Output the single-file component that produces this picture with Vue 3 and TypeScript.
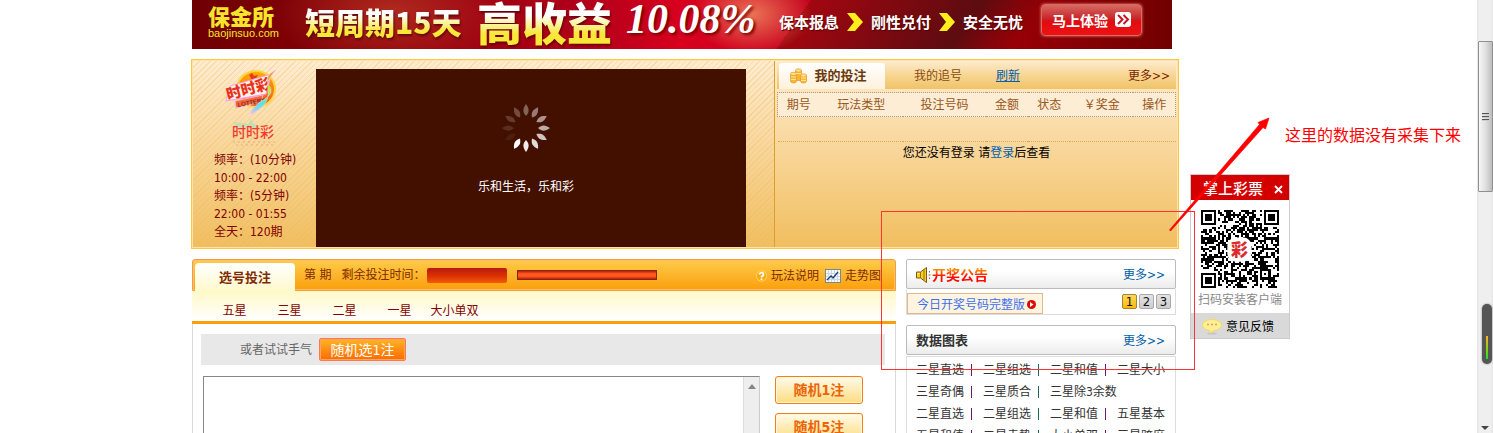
<script setup lang="ts">
import { ref } from 'vue'

const schedule = ['频率：(10分钟)', '10:00 - 22:00', '频率：(5分钟)', '22:00 - 01:55', '全天：120期']
const columns = ['期号', '玩法类型', '投注号码', '金额', '状态', '￥奖金', '操作']
const modes = ['五星', '三星', '二星', '一星', '大小单双']
const charts: string[][] = [
  ['二星直选', '二星组选', '二星和值', '二星大小'],
  ['三星奇偶', '三星质合', '三星除3余数'],
  ['二星直选', '二星组选', '二星和值', '五星基本'],
  ['五星和值', '二星走势', '大小单双', '三星跨度'],
]
const activePage = ref(1)
const numbers = ref('')
const petals = [0.35, 0.45, 0.55, 0.65, 0.75, 0.85, 0.92, 1, 0.06, 0.12, 0.18, 0.25].map((o, i) => ({
  o,
  r: i * 30,
}))

const SIZE = 37

function finder(x: number, y: number): boolean | null {
  const corners = [[0, 0], [SIZE - 7, 0], [0, SIZE - 7]]
  for (const [cx, cy] of corners) {
    const dx = x - cx
    const dy = y - cy
    if (dx >= -1 && dx <= 7 && dy >= -1 && dy <= 7) {
      const d = Math.max(Math.abs(dx - 3), Math.abs(dy - 3))
      return d === 3 || d <= 1
    }
  }
  const a = Math.max(Math.abs(x - 30), Math.abs(y - 30))
  if (a <= 2) return a !== 1
  return null
}

function buildQr(): string {
  let seed = 20157
  let d = ''
  for (let y = 0; y < SIZE; y++) {
    for (let x = 0; x < SIZE; x++) {
      seed = (seed * 1103515245 + 12345) % 2147483648
      const fixed = finder(x, y)
      const on = fixed === null ? (seed >> 12) % 100 < 52 : fixed
      if (on) d += `M${x} ${y}h1v1h-1z`
    }
  }
  return d
}
const qrPath = buildQr()
</script>

<template>
  <div class="page">
    <main class="main">
      <a href="#" class="banner">
        <span class="brand"><b>保金所</b><i>baojinsuo.com</i></span>
        <span class="term">短周期15天</span>
        <span class="yield">高收益</span>
        <span class="rate">10.08%</span>
        <span class="perks">
          <span>保本报息</span>
          <svg width="16" height="18" viewBox="0 0 16 18"><path d="M0 0h8l8 9-8 9H0l7-9z" fill="#ffee1c" /></svg>
          <span>刚性兑付</span>
          <svg width="16" height="18" viewBox="0 0 16 18"><path d="M0 0h8l8 9-8 9H0l7-9z" fill="#ffee1c" /></svg>
          <span>安全无忧</span>
        </span>
        <span class="try">
          马上体验
          <svg width="16" height="15" viewBox="0 0 16 15">
            <rect width="16" height="15" rx="3" fill="#fff" />
            <path d="M3 3l4.500 4.500L3 12M8.500 3l4.500 4.500L8.500 12" fill="none" stroke="#c8141c" stroke-width="2" />
          </svg>
        </span>
      </a>

      <section class="top">
        <div class="draw">
          <div class="info">
            <svg class="logo" width="60" height="78" viewBox="0 0 60 78">
              <defs>
                <linearGradient id="ball" x1="0" y1="0" x2="0" y2="1">
                  <stop offset="0" stop-color="#ffb000" /><stop offset="1" stop-color="#f0541e" />
                </linearGradient>
                <linearGradient id="tail" x1="0" y1="0" x2="0" y2="1">
                  <stop offset="0" stop-color="#ff7a1a" /><stop offset="0.450" stop-color="#a8ff1a" />
                  <stop offset="0.750" stop-color="#4fe8e0" /><stop offset="1" stop-color="#e9b8ff" />
                </linearGradient>
              </defs>
              <ellipse cx="32" cy="20" rx="19" ry="18" fill="url(#ball)" stroke="#ffd447" stroke-width="2" />
              <path d="M28 4l2 3 4-1-2 3 1 3-4-1-3 1 1-3-2-3z" fill="#e8381b" />
              <path d="M6 17l38-11 2 4-4 15-40 7z" fill="#fff3ea" stroke="#ff9ae0" />
              <text x="4" y="31" class="logo-mark" transform="rotate(-15 4 31)">时时彩</text>
              <path d="M11 32l28-6-2 7-25 6z" fill="#f4693a" stroke="#ffb0d8" />
              <text x="14" y="38" class="logo-sub" transform="rotate(-11 14 38)">LOTTERY</text>
              <path d="M52 1c-8 4-11 9-7 15 4 6 2 10-4 14-8 5-12 8-15 16 11-6 17-11 18-19 1-7-4-14 8-26z" fill="url(#tail)" stroke="#f7c4ff" stroke-width="0.600" />
              <path d="M10 53l15 2 1-6c2 5 6 6 9 10l-24-1z" fill="#8fe0c0" opacity="0.450" />
              <text x="29" y="68" text-anchor="middle" class="logo-name">时时彩</text>
              <path d="M9 73h42M12 76h38" stroke="#e8543a" stroke-width="1.500" stroke-dasharray="2 3" opacity="0.250" />
            </svg>
            <ul class="schedule">
              <li v-for="(s, i) in schedule" :key="i">{{ s }}</li>
            </ul>
          </div>
          <div class="video">
            <svg width="50" height="50" viewBox="-25 -25 50 50">
              <path
                v-for="p in petals" :key="p.r" d="M0-24C3.500-19 3.500-16 0-12C-3.500-16-3.500-19 0-24z"
                fill="#fff" :opacity="p.o" :transform="`rotate(${p.r})`"
              />
            </svg>
            <p>乐和生活，乐和彩</p>
          </div>
        </div>
        <div class="bets">
          <nav class="tabs">
            <a href="#" class="tab active">
              <svg width="17" height="16" viewBox="0 0 17 16">
                <g fill="#f7b733" stroke="#e8963a" stroke-width="0.700">
                  <path d="M5.500 2.500v10h6v-10z" /><ellipse cx="8.500" cy="2.500" rx="3" ry="1.700" fill="#ffe27a" />
                  <path d="M.500 6.500v7c1 2 5 2 6 0v-7z" /><ellipse cx="3.500" cy="6" rx="3" ry="1.700" fill="#ffe27a" />
                  <path d="M10.500 7.500v6c1 2 5 2 6 0v-6z" /><ellipse cx="13.500" cy="7.500" rx="3" ry="1.700" fill="#ffe27a" />
                </g>
                <path d="M1 9h5M1 11.500h5M11 10h5M11 12.500h5M6 5.500h5" stroke="#ffe88c" />
              </svg>
              我的投注
            </a>
            <a href="#" class="tab">我的追号</a>
            <a href="#" class="refresh">刷新</a>
            <a href="#" class="all">更多&gt;&gt;</a>
          </nav>
          <table>
            <colgroup><col class="w1"><col class="w2"><col class="w2"><col class="w1"><col class="w1"><col class="w3"><col class="w1"></colgroup>
            <thead><tr><th v-for="c in columns" :key="c">{{ c }}</th></tr></thead>
            <tbody><tr><td v-for="c in columns" :key="c"></td></tr></tbody>
          </table>
          <p class="login">您还没有登录 请<a href="#">登录</a>后查看</p>
        </div>
      </section>

      <div class="lower">
        <section class="play">
          <header>
            <h2>选号投注</h2>
            <span class="issue">第 期</span>
            <span class="remain">剩余投注时间：</span>
            <span class="clock"></span>
            <span class="progress"></span>
            <a href="#" class="help">
              <svg width="11" height="12" viewBox="0 0 11 12">
                <circle cx="5.500" cy="6" r="5.500" fill="#ffd860" /><circle cx="5.500" cy="6" r="4.700" fill="#fbab10" />
                <path d="M3.500 4.500c0-2.500 4-2.500 4 0 0 1.500-2 1.300-2 3M5.500 8.500v1.500" fill="none" stroke="#fff" stroke-width="1.800" />
              </svg>
              玩法说明
            </a>
            <a href="#" class="trend">
              <svg width="16" height="14" viewBox="0 0 16 14">
                <rect x=".5" y=".5" width="15" height="13" fill="#f5f9ff" stroke="#7b8792" />
                <path d="M3.500 1v12M6.500 1v12M9.500 1v12M12.500 1v12M1 4.500h14M1 7.500h14M1 10.500h14" stroke="#c8d8ea" />
                <path d="M2 11l4-4 2 2 5-6" fill="none" stroke="#27406b" stroke-width="1.300" />
              </svg>
              走势图
            </a>
          </header>
          <nav class="modes"><a v-for="m in modes" :key="m" href="#">{{ m }}</a></nav>
          <div class="play-body">
            <div class="lucky"><span>或者试试手气</span><button type="button">随机选1注</button></div>
            <div class="picker">
              <div class="box">
                <textarea v-model="numbers" aria-label="投注号码"></textarea>
                <div class="strip"><svg width="8" height="5" viewBox="0 0 8 5"><path d="M4 0l4 5H0z" fill="#858585" /></svg></div>
              </div>
              <div class="random">
                <button type="button">随机1注</button>
                <button type="button">随机5注</button>
              </div>
            </div>
          </div>
        </section>

        <aside class="news">
          <section>
            <header class="head">
              <svg width="15" height="16" viewBox="0 0 15 16">
                <path d="M.5 5h4l6-4.500v15L4.500 11h-4z" fill="#f8cf1e" stroke="#7d5514" />
                <path d="M4.500 5v6M8 3v10" stroke="#9c6a12" /><path d="M1.500 6.500h2" stroke="#fff7b0" />
                <path d="M13.500 4v1.500M12.500 8h2M13.500 10.500v1.500" stroke="#8d6520" />
              </svg>
              <h3 class="hot">开奖公告</h3>
              <a href="#">更多&gt;&gt;</a>
            </header>
            <div class="today">
              <a href="#" class="full">今日开奖号码完整版<svg width="9" height="9" viewBox="0 0 9 9"><circle cx="4.500" cy="4.500" r="4.500" fill="#dc0a0a" /><path d="M3 2l3.500 2.500L3 7z" fill="#fff" /></svg></a>
              <div class="pager">
                <button
                  v-for="n in 3" :key="n" type="button" :class="{ on: n === activePage }" @click="activePage = n"
                >{{ n }}</button>
              </div>
            </div>
          </section>
          <section>
            <header class="head"><h3>数据图表</h3><a href="#">更多&gt;&gt;</a></header>
            <ul class="charts">
              <li v-for="(row, i) in charts" :key="i">
                <a v-for="c in row" :key="c" href="#"><span>{{ c }}</span></a>
              </li>
            </ul>
          </section>
        </aside>
      </div>
    </main>

    <div class="side">
      <div class="app-card">
        <header><h3>掌上彩票</h3><button type="button" aria-label="关闭">
          <svg width="9" height="9" viewBox="0 0 9 9"><path d="M1 1l7 7M8 1l-7 7" stroke="#fff" stroke-width="1.800" /></svg>
        </button></header>
        <svg class="qr" width="78" height="78" viewBox="0 0 37 37" shape-rendering="crispEdges">
          <path :d="qrPath" />
          <rect x="12.500" y="13" width="11.500" height="11.500" rx="4" fill="#fff" shape-rendering="auto" />
          <text x="18.200" y="21.700" text-anchor="middle" class="qr-mark">彩</text>
        </svg>
        <p>扫码安装客户端</p>
        <a href="#" class="feedback">
          <svg width="20" height="16" viewBox="0 0 20 16">
            <ellipse cx="10" cy="14.500" rx="5" ry="1" fill="#c2c2c2" />
            <path d="M10 .500c5.500 0 9.500 2.500 9.500 5.500s-4 5.500-8 5.500L8 14.500V11.500C3.500 11 .500 9 .500 6S4.500.500 10 .500z" fill="#ffef9a" stroke="#f5d95c" />
            <path d="M5 5.500h2M9 5.500h2M13 5.500h2" stroke="#dda92c" stroke-width="1.500" />
          </svg>
          意见反馈
        </a>
      </div>
      <svg class="marks" width="613" height="433" viewBox="880 0 613 433">
        <rect x="881.500" y="211.500" width="313" height="158" fill="none" stroke="#f33" />
        <path d="M1169.500 230L1259.500 124.500L1258 122.500L1269 118L1265.500 129L1263 127.500L1170.500 231z" fill="#f00" stroke="#f00" stroke-width="0.700" />
      </svg>
      <p class="note">这里的数据没有采集下来</p>
    </div>

    <div class="scroll">
      <div class="thumb"><i></i><i></i><i></i></div>
      <svg class="down" width="8" height="4" viewBox="0 0 8 4"><path d="M0 0h8L4 4z" fill="#444" /></svg>
      <div class="meter"></div>
    </div>
  </div>
</template>

<style>
body { margin: 0; background: #fff; }
</style>

<style scoped>
* { box-sizing: border-box; }
.page {
  position: relative; display: flex; height: 100vh; overflow: hidden; padding-left: 191px;
  font: 12px/18px "DejaVu Sans Condensed", "Noto Sans CJK SC", sans-serif; color: #333;
}
h2, h3, p, ul { margin: 0; padding: 0; }
ul { list-style: none; }
a { color: inherit; text-decoration: none; }
svg { display: block; flex: none; }
button { padding: 0; font-family: inherit; cursor: pointer; }
.main { flex: 1; min-width: 0; }

.banner {
  display: flex; align-items: center; height: 49px; margin: 0 7px 10px 1px; padding-left: 16px; overflow: hidden;
  color: #fff; white-space: nowrap; font-family: "Noto Sans CJK SC", sans-serif; font-weight: 700;
  background:
    radial-gradient(ellipse 60px 40px at 560px 14px, rgba(255, 190, 120, .6), transparent),
    radial-gradient(ellipse 120px 60px at 200px 12px, rgba(190, 60, 40, .7), transparent),
    linear-gradient(125deg, transparent 61%, #a30610 61%, #5c0c10 78%, transparent 84%),
    linear-gradient(90deg, #6e0002, #8c0008 20%, #b1001a 40%, #d8001e 50%, #c60420 62%, #a00008 80%, #720000);
}
.brand { display: flex; flex-direction: column; width: 97px; margin-bottom: 8px; color: #f6e42c; }
.brand b { font-size: 22px; line-height: 24px; font-weight: 900; }
.brand i { font: 11px/12px "Liberation Sans", sans-serif; }
.term, .yield { color: transparent; background-clip: text; background-image: linear-gradient(#fff 35%, #f8e638 75%); font-weight: 900; filter: drop-shadow(1px 2px 1px rgba(60, 0, 0, .6)); }
.term { width: 172px; margin-bottom: 8px; font-size: 30px; line-height: 40px; }
.yield { width: 149px; margin-bottom: 6px; font-size: 45px; line-height: 48px; }
.rate { width: 153px; margin-bottom: 12px; font: italic 700 42px/42px "Liberation Serif", serif; text-shadow: 2px 2px 3px #700; }
.perks { display: flex; align-items: center; gap: 8px; width: 262px; margin-bottom: 5px; font-size: 15px; text-shadow: 1px 1px 1px #500; }
.try {
  display: flex; align-items: center; justify-content: center; gap: 7px; width: 101px; height: 32px; margin-bottom: 10px;
  border: 1px solid #e0685c; border-radius: 4px; font-size: 14px; box-shadow: 0 0 3px #e88;
  background: linear-gradient(#d56a62, #c8262a 45%, #e00c10 55%, #ee1212);
}

.top { display: flex; height: 190px; border: 1px solid #ffc444; box-shadow: inset 0 0 0 1px #fde3a8; background: linear-gradient(#ffecd0, #f1be5f); }
.draw {
  display: flex; flex: 1; margin: 1px; padding: 8px 28px 0 21px; border-right: 1px solid #dba02a;
  background: repeating-linear-gradient(135deg, rgba(233, 184, 90, .3) 0 1px, transparent 1px 4px);
}
.info { width: 102px; color: #820000; }
.logo { margin-left: 10px; }
.logo-mark { font: 900 15px "Noto Sans CJK SC", sans-serif; fill: #e8321a; }
.logo-sub { font: 700 6px "Liberation Sans", sans-serif; fill: #8c2a18; }
.logo-name { font: 500 14px "Noto Sans CJK SC", sans-serif; fill: #ee3a30; }
.schedule { padding-top: 4px; white-space: nowrap; }
.video { display: flex; flex: 1; flex-direction: column; align-items: center; gap: 25px; height: 178px; padding: 34px 10px 0 0; background: #431000; color: #fff; }
.bets { width: 402px; padding: 2px 2px 0 1px; }
.tabs { display: flex; align-items: center; height: 27px; padding-right: 6px; color: #8a4b12; background: linear-gradient(#fdeacb, #f7d592 50%, #f0c368); }
.tab { display: flex; align-items: center; justify-content: center; gap: 7px; height: 26px; margin-top: 1px; }
.tab.active { width: 106px; margin-left: 2px; padding-right: 7px; border-radius: 3px 3px 0 0; background: linear-gradient(#fff, #fff1dc); color: #6b3a0a; font-size: 13px; font-weight: 700; }
.tab + .tab { width: 106px; }
.refresh { margin-left: 5px; color: #0060b0; text-decoration: underline; }
.all { margin-left: auto; color: #7a2600; }
table { width: 100%; margin-top: 3px; border-collapse: collapse; table-layout: fixed; color: #99571c; }
thead { border: 1px dotted #b09a78; background: #feedd5; }
th { height: 24px; padding: 0; font-weight: 400; white-space: nowrap; }
td { height: 25px; padding: 0; border-bottom: 1px dotted #d8a850; }
.w1 { width: 42px; } .w2 { width: 83px; } .w3 { width: 63px; }
.login { padding-top: 2px; color: #000; text-align: center; }
.login a { color: #0060b0; }

.lower { display: flex; align-items: flex-start; gap: 10px; margin: 10px 3px 0 1px; }
.play { flex: 1; min-width: 0; }
.play header {
  display: flex; align-items: center; height: 32px; padding: 0 14px 0 2px; border: 1px solid #f49c45; border-radius: 3px 3px 0 0;
  color: #802c00; background: linear-gradient(#ffcb4a, #fa9f0c); box-shadow: inset 0 0 0 1px #ffc062; white-space: nowrap;
}
.play h2 { align-self: flex-end; width: 100px; height: 28px; margin-bottom: -1px; border-radius: 4px 4px 0 0; background: linear-gradient(#fff, #fff9cc); font-size: 13px; line-height: 30px; text-align: center; }
.issue { margin: 0 10px 0 9px; }
.remain { margin-right: 2px; }
.clock { width: 80px; height: 15px; border-radius: 2px; background: linear-gradient(#b81a14, #d83000 50%, #f65a08); }
.progress { width: 140px; height: 10px; margin-left: 10px; border: 1px solid #7a2a10; background: linear-gradient(#c81808, #ff5a20 35% 65%, #d01808); }
.help, .trend { display: flex; align-items: center; gap: 4px; padding-top: 2px; }
.help { margin-left: auto; margin-right: 6px; }
.modes { display: flex; height: 33px; padding: 1px 0 0 15px; border-bottom: 3px solid #f8a00c; background: linear-gradient(#fff9c8, #fff); color: #850000; line-height: 38px; }
.modes a { width: 55px; text-align: center; white-space: nowrap; }
.play-body { padding: 10px 10px 0 8px; border: solid #d9d9d9; border-width: 0 1px; }
.lucky { display: flex; align-items: center; gap: 7px; height: 31px; padding-left: 39px; background: #e8e8e8; color: #666; }
.lucky button { width: 87px; height: 23px; border: 1px solid #ff7850; border-radius: 2px; background: linear-gradient(#ffb428, #ff6a00); box-shadow: inset 0 0 0 1px #ffa45a; color: #fff; font-size: 14px; line-height: 20px; }
.picker { display: flex; gap: 15px; padding: 11px 22px 0 2px; }
.box { display: flex; flex: 1; height: 120px; border: 1px solid #888; border-right-color: #ccc; }
textarea { flex: 1; border: 0; padding: 4px; resize: none; outline: 0; font: inherit; }
.strip { width: 16px; padding: 7px 4px; background: #eee; border-left: 1px solid #ddd; }
.random { display: flex; flex-direction: column; gap: 9px; }
.random button { width: 88px; height: 28px; border: 1px solid #f08018; border-radius: 3px; background: linear-gradient(#fffbea, #fbdc80); box-shadow: inset 0 0 0 1px #fff6dc; color: #ec6408; font-size: 14px; font-weight: 700; line-height: 24px; }

.news { width: 270px; }
.head { display: flex; align-items: center; height: 30px; padding: 2px 10px 0 9px; border: 1px solid #bbb; border-radius: 2px; background: linear-gradient(#fff 40%, #ececec); }
.head h3 { font-size: 13px; color: #333; }
.head .hot { margin-left: 1px; font-size: 14px; color: transparent; background: linear-gradient(#ff8a00 20%, #ff0800 60%) text; }
.head a { margin-left: auto; color: #0060a8; }
.today { display: flex; align-items: flex-end; justify-content: space-between; height: 26px; margin-bottom: 10px; padding-right: 4px; border: solid #ddd; border-width: 0 1px 1px; }
.full { display: flex; align-items: center; gap: 2px; height: 21px; padding: 2px 6px 0 9px; border: 1px solid #e0b894; background: #fef4e0; color: #3d70f0; white-space: nowrap; }
.pager { display: flex; gap: 2px; padding-bottom: 5px; }
.pager button { width: 15px; height: 15px; border: 1px solid #aaa; border-radius: 2px; background: linear-gradient(#e4e4e4, #ccc); color: #111; font-size: 13px; line-height: 14px; }
.pager .on { border-color: #a5832a; background: linear-gradient(#ffd75c, #fcb90c); }
.charts { margin-top: 1px; padding: 2px 0 0 9px; border: solid #ddd; border-width: 1px 1px 0; line-height: 22px; }
.charts li { display: flex; }
.charts a { display: flex; align-items: center; width: 67px; white-space: nowrap; }
.charts a:not(:last-child)::after { content: ""; width: 1px; height: 12px; margin-left: 7px; background: #6a1b6a; }
.charts a:nth-child(even)::after { background: #1b6a4a; }
.charts a:last-child { width: 58px; }

.side { position: relative; width: 298px; flex: none; }
.app-card { width: 100px; margin: 174px 0 0 11px; border: 1px solid #ccc; background: #fff; }
.app-card header { display: flex; align-items: center; height: 25px; padding: 3px 6px 0 12px; background: #d40000; color: #fff; }
.app-card h3 { font-size: 15px; font-weight: 500; white-space: nowrap; }
.app-card header button { margin-left: auto; border: 0; background: none; }
.qr { margin: 10px 0 0 10px; }
.qr-mark { font: 900 8px "Noto Sans CJK SC", sans-serif; fill: #e02a2a; }
.app-card p { color: #888; text-align: center; line-height: 24px; }
.feedback { display: flex; align-items: center; gap: 4px; height: 25px; padding: 2px 0 0 11px; margin-top: 1px; background: #d9d9d9; color: #000; }
.marks { position: absolute; top: 0; right: -16px; pointer-events: none; }
.note { position: absolute; top: 124px; right: 16px; color: #f00; font-size: 16px; line-height: 24px; white-space: nowrap; }

.scroll { position: relative; display: flex; flex: none; flex-direction: column; align-items: center; width: 16px; padding: 41px 0 3px; background: linear-gradient(90deg, #e4e4e4, #efefef 15% 85%, #e6e6e6); }
.thumb { display: flex; flex-direction: column; align-items: center; justify-content: center; gap: 1px; width: 15px; height: 151px; border: 1px solid #8f8f8f; border-radius: 1px; background: linear-gradient(90deg, #f6f6f6, #e0e0e0 50%, #bdbdbd); }
.thumb i { width: 7px; height: 2px; background: #555; border-bottom: 1px solid #ccc; }
.down { margin-top: auto; }
.meter { position: absolute; top: 304px; right: 1px; width: 10px; height: 60px; border-radius: 5px; box-shadow: 0 0 2px #777; background: linear-gradient(#ffb020, #9ccc10 50%, #10e820) 50% 32px / 2px 23px no-repeat, #555; }
</style>
